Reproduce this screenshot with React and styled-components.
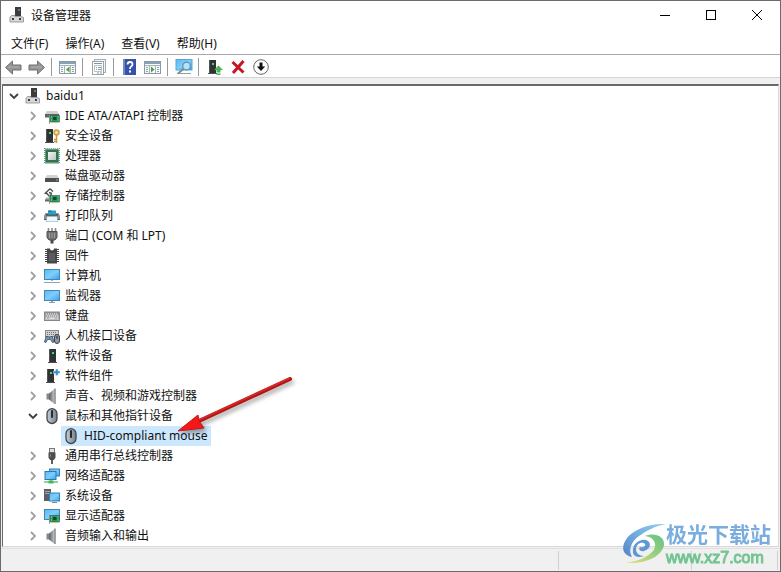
import React, { useState } from 'react';
import styled, { createGlobalStyle } from 'styled-components';

const GlobalStyle = createGlobalStyle`
    * {
        box-sizing: border-box;
    }
    body {
        margin: 0;
        background: #ffffff;
        color: #111111;
        font-family: "Noto Sans", "Noto Sans CJK SC", sans-serif;
        font-size: 12px;
    }
    button {
        font: inherit;
        color: inherit;
        background: none;
        border: none;
        padding: 0;
    }
    svg {
        display: block;
        flex: none;
        overflow: visible;
    }
`;

// ---------- shared icon pieces ----------
const Icon = ({ size = 16, children }) => (
    <svg width={size} height={size} viewBox={`0 0 ${size} ${size}`} aria-hidden="true">
        {children}
    </svg>
);

const Gradients = () => (
    <GradientDefs width="0" height="0" aria-hidden="true">
        <defs>
            <linearGradient id="screen" x1="0" y1="0" x2="1" y2="1">
                <stop offset="0" stopColor="#5db9f3" />
                <stop offset=".5" stopColor="#7fcdfb" />
                <stop offset="1" stopColor="#36a3ee" />
            </linearGradient>
            <linearGradient id="cone" x1="0" y1="0" x2="1" y2="0">
                <stop offset="0" stopColor="#5d6165" />
                <stop offset="1" stopColor="#c4c7c9" />
            </linearGradient>
            <linearGradient id="chip" x1="0" y1="0" x2="1" y2="1">
                <stop offset="0" stopColor="#f4f5f4" />
                <stop offset="1" stopColor="#b9c6bd" />
            </linearGradient>
            <linearGradient id="body" x1="0" y1="0" x2="1" y2="0">
                <stop offset="0" stopColor="#c3ccd6" />
                <stop offset="1" stopColor="#77828f" />
            </linearGradient>
            <linearGradient id="keys" x1="0" y1="0" x2="0" y2="1">
                <stop offset="0" stopColor="#8d9093" />
                <stop offset="1" stopColor="#c2c4c6" />
            </linearGradient>
            <linearGradient id="swirlBlue" x1="0" y1="1" x2="1" y2="0">
                <stop offset="0" stopColor="#4878c4" />
                <stop offset="1" stopColor="#7fd0f0" />
            </linearGradient>
            <linearGradient id="swirlGreen" x1="0" y1="1" x2="1" y2="0">
                <stop offset="0" stopColor="#e0dc6c" />
                <stop offset="1" stopColor="#4fbd78" />
            </linearGradient>
        </defs>
    </GradientDefs>
);

const Card = () => (
    <g>
        <path d="M5.500 7v9" stroke="#a4a7a5" />
        <rect x="6" y="7.500" width="9.500" height="6.500" fill="#2f9360" stroke="#226a45" strokeWidth=".6" />
        <rect x="9" y="9" width="3.500" height="3" fill="#14492f" />
        <path d="M7 9h1M13.500 9h1M7 12h1M13.500 12h1" stroke="#b4e4b9" />
        <path d="M8 14.700h6" stroke="#d0b95a" strokeDasharray="1 .6" />
    </g>
);

const Tower = ({ x = 4 }) => (
    <g>
        <rect x={x + 1} y="1" width="7" height="13" fill="#303235" />
        <path d={`M${x + 1.5} 1v13`} stroke="#505357" />
        <rect x={x + 4} y="4" width="2" height="2" fill="#45d96a" />
        <path d={`M${x} 14.500h9`} stroke="#4c4e50" />
    </g>
);

const Mouse = () => (
    <g>
        <rect x="3" y=".7" width="10" height="14.800" rx="5" fill="url(#body)" stroke="#40464e" strokeWidth="1.300" />
        <rect x="7" y="2" width="2" height="8" rx="1" fill="#26292d" />
    </g>
);

const Speaker = () => (
    <g>
        <path d="M2.500 5.500h2.500v6H2.500z" fill="#85898c" />
        <path d="M5 5.500L10.500 1v15L5 11.500z" fill="url(#cone)" />
        <path d="M11 .5v15.500" stroke="#85898c" strokeWidth="1.500" />
    </g>
);

const ICONS = {
    computer: (
        <g>
            <rect x="6" y="0" width="6" height="9" fill="#3a3c3f" />
            <rect x="9.500" y="2" width="1" height="2" fill="#8fc49f" />
            <path d="M2.500 8.500h3.500v1h6l2.500 1V15H1v-5z" fill="#d6d7d9" stroke="#8b8c8e" strokeWidth=".8" />
            <rect x="3" y="11" width="2" height="2" fill="#3c3d40" />
            <rect x="10" y="11" width="2" height="2" fill="#3c3d40" />
        </g>
    ),
    ide: (
        <g>
            <path d="M3 3h10l2 3H1z" fill="#cfcfcf" />
            <rect x="1" y="6" width="14" height="3.500" fill="#626467" />
            <Card />
        </g>
    ),
    security: (
        <g>
            <Tower x={1} />
            <circle cx="12.500" cy="4.500" r="2.400" fill="#f4e3bd" stroke="#d2a24c" strokeWidth="1.800" />
            <path d="M12.500 7v8M12 11.500h-2M12 13.500h-2" stroke="#c99a44" strokeWidth="1.600" />
        </g>
    ),
    cpu: (
        <g>
            <rect x=".7" y=".7" width="14.600" height="14.600" fill="none" stroke="#5d8f6f" strokeWidth="1.200" strokeDasharray="1 1" />
            <rect x="1.300" y="1.300" width="13.400" height="13.400" fill="#32734d" />
            <rect x="4" y="4" width="8" height="8" fill="url(#chip)" />
        </g>
    ),
    disk: (
        <g>
            <path d="M3 7h10l2 3H1z" fill="#d2d2d2" />
            <rect x="1" y="10" width="14" height="4" rx=".5" fill="#4c4e51" />
            <rect x="12" y="11.500" width="2" height="1" fill="#6ed38a" />
        </g>
    ),
    storage: (
        <g>
            <path d="M6 .8L2 4.500l3 3.500 3-1.500M6 .8l3 2.700M.5 5.500L3 5M5 4.500l3 1" fill="none" stroke="#4a4c4e" strokeWidth="1.400" />
            <path d="M2 9.500h6v3H1z" fill="#aaacae" />
            <path d="M1 12.500h6" stroke="#636567" strokeWidth="2" />
            <Card />
        </g>
    ),
    printer: (
        <g>
            <path d="M1.500 5h13L16 8v3.500H0V8z" fill="#8b8f93" />
            <path d="M2 6h12v2H2z" fill="#5b5f64" />
            <path d="M4 2.500h8v4H4z" fill="#28a2c4" />
            <path d="M4.500 3h3" stroke="#1e5d73" />
            <path d="M3 8.500h10l1 5H2z" fill="#eef7fd" stroke="#8cb0c6" strokeWidth=".6" />
            <path d="M0 11.500h2.500M13.500 11.500H16" stroke="#54585c" />
        </g>
    ),
    port: (
        <g>
            <path d="M4.500 0v4M8 0v4M11.500 0v4" stroke="#8b8b8b" strokeWidth="1.600" />
            <path d="M3 3.500h10V9.500l-2 2.500H5L3 9.500z" fill="#6f7173" stroke="#525355" />
            <path d="M5.500 5v5M8 5v5M10.500 5v5" stroke="#a2a4a5" strokeWidth=".9" />
            <rect x="6.500" y="12" width="3" height="3.500" fill="#48494b" />
        </g>
    ),
    firmware: (
        <g>
            <path d="M3 .5h3q0 2 2 2t2-2h3v15H3z" fill="#454648" />
            <path d="M2 1v14M14 1v14" stroke="#454648" strokeWidth="2" strokeDasharray="1 1" />
            <path d="M5 5h6v8H5z" fill="#5b5c5e" />
        </g>
    ),
    pc: (
        <g>
            <rect x=".5" y="1.500" width="15" height="10" fill="url(#screen)" stroke="#4187b5" />
            <path d="M7 12h2v1H7z" fill="#a3b0b8" />
            <path d="M0 14.500h16" stroke="#91a6b4" />
        </g>
    ),
    monitor: (
        <g>
            <rect x=".5" y="2.500" width="15" height="10" fill="url(#screen)" stroke="#4187b5" />
            <path d="M7 13h2v1H7zM5 14h6v1H5z" fill="#8f9da5" />
        </g>
    ),
    keyboard: (
        <g>
            <rect x=".5" y="4" width="15" height="8.500" fill="url(#keys)" stroke="#85878a" />
            <path d="M2 6h12M3 8h11" stroke="#f3f3f3" strokeDasharray="1 1" />
            <path d="M2 10.200h1M5 10.200h6M13 10.200h1" stroke="#f3f3f3" />
        </g>
    ),
    hid: (
        <g>
            <rect x="1.500" y="2.500" width="13" height="6" fill="#cfd1d3" stroke="#85878a" />
            <path d="M3 4.500h10M3 6.500h10" stroke="#727476" strokeDasharray="1 1" />
            <path d="M.5 14L2 8.500h2l1 1h1l1-1h1.500l1.500 5.500-1.500.5-2-3h-3l-1.500 3z" fill="#6f93b3" stroke="#3e5262" strokeWidth=".8" />
            <rect x="10.500" y="6.500" width="5" height="9" rx="2.500" fill="#8d98a5" stroke="#3d434a" />
            <path d="M13 8v3" stroke="#222" />
        </g>
    ),
    software: <Tower x={4} />,
    component: (
        <g>
            <Tower x={2} />
            <path d="M9.500 3h2V1h2.500v2h2v2.500h-2v2h-2.500v-2h-2z" fill="#3c93cf" stroke="#ffffff" strokeWidth=".4" />
        </g>
    ),
    speaker: <Speaker />,
    mouse: <Mouse />,
    usb: (
        <g>
            <rect x="5.500" y=".5" width="5" height="4" fill="#e0e1e2" stroke="#77787a" />
            <path d="M4.500 4.500h7V9.500l-1.500 2.500H6L4.500 9.500z" fill="#4c4e50" />
            <path d="M6.500 6v3" stroke="#828486" />
            <path d="M8 12v4" stroke="#5c5e60" strokeWidth="2" />
        </g>
    ),
    network: (
        <g>
            <rect x="5.500" y="1" width="10" height="7" fill="url(#screen)" stroke="#3482b8" />
            <rect x="1" y="3.500" width="11" height="8" fill="url(#screen)" stroke="#2d78ad" />
            <path d="M7 12v2.500M0 14h14" stroke="#6fc47c" strokeWidth="1.500" />
            <rect x="4.500" y="12.500" width="5" height="3" fill="#4db35e" />
        </g>
    ),
    system: (
        <g>
            <rect x="0" y="1" width="7" height="12" fill="#5b5e62" />
            <path d="M1 3.500h5M1 5.500h5" stroke="#a2a6a9" />
            <rect x="5.500" y="5" width="10" height="8" fill="url(#screen)" stroke="#3482b8" />
            <path d="M8 14.500h5" stroke="#7e8d97" />
        </g>
    ),
    display: (
        <g>
            <rect x=".5" y="1.500" width="15" height="10" fill="url(#screen)" stroke="#4187b5" />
            <Card />
        </g>
    ),
};

const PaneIcon = ({ flip }) => (
    <Icon size={17}>
        <rect x=".5" y="2.500" width="16" height="12" fill="#f7f9fa" stroke="#8d999f" />
        <path d="M1 4h15" stroke="#87a3b3" strokeWidth="2" />
        <path d="M1 6.500h15M5.500 7v7M11.500 7v7" stroke="#a5b3bb" />
        <path d="M2 8.500h2M2 10.500h2M2 12.500h2M13 8.500h2M13 10.500h2M13 12.500h2" stroke="#8aa5b4" />
        {flip ? <path d="M7 7.500l3.500 3L7 13.500z" fill="#4f9d37" /> : <path d="M10.500 7.500l-3.500 3 3.500 3z" fill="#4f9d37" />}
    </Icon>
);

const BackArrow = ({ forward }) => (
    <Icon size={17}>
        <path
            d={forward ? 'M16.500 8.500L9.500 2v4H1v5h8.500v4z' : 'M.5 8.500L7.500 2v4H16v5H7.500v4z'}
            fill="#959595"
            stroke="#707070"
            strokeLinejoin="round"
        />
        <path d="M3 8h11" stroke="#b0b0b0" />
    </Icon>
);

// null is a separator
const TOOLS = [
    { name: '后退', icon: <BackArrow /> },
    { name: '前进', icon: <BackArrow forward /> },
    null,
    { name: '显示/隐藏控制台树', icon: <PaneIcon /> },
    null,
    {
        name: '属性',
        icon: (
            <Icon>
                <rect x="3.500" y=".5" width="11" height="13" fill="#f2f4f5" stroke="#a5adb2" />
                <rect x="1.500" y="2.500" width="11" height="13" fill="#ffffff" stroke="#98a3a9" />
                <path d="M3 4.500h8" stroke="#8195a0" />
                <path d="M3.500 6.500h7v6h-7z" fill="none" stroke="#b9c2c7" />
                <path d="M5 8.500h1M7 8.500h3M5 10.500h1M7 10.500h3M6 14h2M9 14h2" stroke="#839aa7" />
            </Icon>
        ),
    },
    null,
    {
        name: '帮助',
        icon: (
            <Icon>
                <rect x="1" y="0" width="13" height="16" fill="#3653a8" />
                <path d="M2 0v16" stroke="#7189c4" strokeWidth="2" />
                <path d="M5.500 5.500Q5.700 3 8 3q2.500 0 2.500 2.200 0 1.300-1.300 2.200Q8 8.300 8 10" fill="none" stroke="#fff" strokeWidth="1.800" />
                <rect x="7" y="11.500" width="2" height="2" fill="#fff" />
            </Icon>
        ),
    },
    { name: '操作', icon: <PaneIcon flip /> },
    null,
    {
        name: '扫描检测硬件改动',
        icon: (
            <Icon>
                <rect x="0" y=".5" width="16" height="10.500" fill="url(#screen)" stroke="#5ba5cf" />
                <path d="M1 14.500h14" stroke="#8da0aa" />
                <path d="M8 9.500l-6 5" stroke="#7c8c96" strokeWidth="1.800" />
                <circle cx="10.500" cy="7" r="3.800" fill="#b5e2f9" stroke="#5e91ad" strokeWidth="1.200" />
            </Icon>
        ),
    },
    null,
    {
        name: '更新驱动程序',
        icon: (
            <Icon>
                <Tower x={1} />
                <path d="M11.500 6.500l4.500 4.500h-2.500v2.500h-4V11H7z" fill="#47b552" />
                <path d="M9.500 15.200h4" stroke="#47b552" strokeWidth="1.500" />
            </Icon>
        ),
    },
    {
        name: '卸载设备',
        icon: (
            <Icon>
                <path d="M2.500 3l11 10.500M13.500 2L3 14" stroke="#c7161f" strokeWidth="3" />
            </Icon>
        ),
    },
    {
        name: '禁用设备',
        icon: (
            <Icon>
                <circle cx="8" cy="8" r="7.300" fill="#fff" stroke="#666" />
                <path d="M6.500 3.500h3v4h2.700L8 12 3.800 7.500h2.700z" fill="#111" />
            </Icon>
        ),
    },
];

const MENUS = ['文件(F)', '操作(A)', '查看(V)', '帮助(H)'];

const DEVICES = [
    { label: 'IDE ATA/ATAPI 控制器', icon: 'ide' },
    { label: '安全设备', icon: 'security' },
    { label: '处理器', icon: 'cpu' },
    { label: '磁盘驱动器', icon: 'disk' },
    { label: '存储控制器', icon: 'storage' },
    { label: '打印队列', icon: 'printer' },
    { label: '端口 (COM 和 LPT)', icon: 'port' },
    { label: '固件', icon: 'firmware' },
    { label: '计算机', icon: 'pc' },
    { label: '监视器', icon: 'monitor' },
    { label: '键盘', icon: 'keyboard' },
    { label: '人机接口设备', icon: 'hid' },
    { label: '软件设备', icon: 'software' },
    { label: '软件组件', icon: 'component' },
    { label: '声音、视频和游戏控制器', icon: 'speaker' },
    {
        label: '鼠标和其他指针设备',
        icon: 'mouse',
        open: true,
        children: [{ label: 'HID-compliant mouse', icon: 'mouse', selected: true, leaf: true }],
    },
    { label: '通用串行总线控制器', icon: 'usb' },
    { label: '网络适配器', icon: 'network' },
    { label: '系统设备', icon: 'system' },
    { label: '显示适配器', icon: 'display' },
    { label: '音频输入和输出', icon: 'speaker' },
];

const ROOT = { label: 'baidu1', icon: 'computer', open: true, children: DEVICES };

const TreeNode = ({ node }) => {
    const [open, setOpen] = useState(Boolean(node.open));

    return (
        <li role="treeitem" aria-expanded={node.leaf ? undefined : open} aria-selected={Boolean(node.selected)}>
            <Row $leaf={node.leaf}>
                {node.leaf ? null : (
                    <Toggle aria-label={`展开 ${node.label}`} onClick={() => setOpen(!open)}>
                        <svg width="10" height="10" viewBox="0 0 10 10" aria-hidden="true">
                            {open ? (
                                <path d="M1 3l4 4 4-4" fill="none" stroke="#3f3f3f" strokeWidth="1.800" />
                            ) : (
                                <path d="M3 1l4 4-4 4" fill="none" stroke="#a0a0a0" strokeWidth="1.800" />
                            )}
                        </svg>
                    </Toggle>
                )}
                <Item $selected={node.selected}>
                    <Icon>{ICONS[node.icon]}</Icon>
                    <Label>{node.label}</Label>
                    {node.selected && <Pointer />}
                </Item>
            </Row>
            {open && node.children && (
                <Branch role="group">
                    {node.children.map((child) => (
                        <TreeNode key={child.label} node={child} />
                    ))}
                </Branch>
            )}
        </li>
    );
};

const Pointer = () => (
    <PointerArt width="120" height="60" viewBox="0 0 120 60" aria-hidden="true">
        <path d="M113 6L22 48" stroke="#b41515" strokeWidth="4" strokeLinecap="round" />
        <path d="M112 5.500L22 47" stroke="#d62c2b" strokeWidth="1.500" strokeLinecap="round" />
        <path d="M1 58l20-16 1 6 5 7z" fill="#f51818" stroke="#c41616" strokeWidth="1" />
    </PointerArt>
);

const App = () => {
    return (
        <Window>
            <GlobalStyle />
            <Gradients />
            <TitleBar>
                <Title>
                    <Icon>{ICONS.computer}</Icon>
                    设备管理器
                </Title>
                <Controls>
                    <ControlButton aria-label="最小化">
                        <svg width="10" height="10" fill="none" stroke="#000">
                            <path d="M0 5.500h10" />
                        </svg>
                    </ControlButton>
                    <ControlButton aria-label="最大化">
                        <svg width="10" height="10" fill="none" stroke="#000">
                            <rect x=".5" y=".5" width="9" height="9" />
                        </svg>
                    </ControlButton>
                    <ControlButton aria-label="关闭">
                        <svg width="10" height="10" fill="none" stroke="#000">
                            <path d="M0 0l10 10M10 0L0 10" />
                        </svg>
                    </ControlButton>
                </Controls>
            </TitleBar>

            <MenuBar>
                {MENUS.map((menu) => (
                    <MenuButton key={menu}>{menu}</MenuButton>
                ))}
            </MenuBar>

            <Toolbar role="toolbar">
                {TOOLS.map((tool, i) =>
                    tool ? (
                        <ToolButton key={i} aria-label={tool.name}>
                            {tool.icon}
                        </ToolButton>
                    ) : (
                        <Separator key={i} />
                    )
                )}
            </Toolbar>

            <TreePanel>
                <Tree role="tree">
                    <TreeNode node={ROOT} />
                </Tree>
            </TreePanel>

            <StatusBar>
                <StatusCell />
                <StatusCell $width="133px" />
                <StatusCell $width="86px" />
            </StatusBar>

            <Watermark>
                <svg width="43" height="42" viewBox="0 0 43 42" aria-hidden="true">
                    <path
                        d="M43 1C27 0 11 6 4 15C-3 25 0 32 9 34C5 27 8 19 16 13C23 8 32 3 43 1z"
                        fill="url(#swirlBlue)"
                    />
                    <path
                        d="M10 30C9 21 16 16 23 17C29 19 28 26 21 28C17 29 15 26 17 24C20 25 23 23 22 21C19 18 13 21 13 26C13 30 16 33 21 33C16 35 11 34 10 30z"
                        fill="#4f8fd2"
                    />
                    <path
                        d="M22 13C31 9 42 13 41 22C39 33 24 41 3 40C17 38 30 32 32 24C33 18 29 14 22 13z"
                        fill="url(#swirlGreen)"
                    />
                </svg>
                <WatermarkText>
                    <SiteName>极光下载站</SiteName>
                    <SiteUrl>www.xz7.com</SiteUrl>
                </WatermarkText>
            </Watermark>
        </Window>
    );
};

const GradientDefs = styled.svg`
    position: absolute;
`;

const Window = styled.main`
    position: relative;
    display: flex;
    flex-direction: column;
    min-height: 100vh;
    border: 1px solid #6b6b6b;
    background: #ffffff;
`;

const TitleBar = styled.header`
    display: flex;
    justify-content: space-between;
    height: 28px;
`;

const Title = styled.h1`
    display: flex;
    align-items: center;
    gap: 6px;
    margin: 0;
    padding-left: 8px;
    font-size: 12px;
    font-weight: 400;
`;

const Controls = styled.div`
    display: flex;
`;

const ControlButton = styled.button`
    display: flex;
    align-items: center;
    justify-content: center;
    width: 46px;
`;

const MenuBar = styled.nav`
    display: flex;
    gap: 1px;
    height: 26px;
    padding: 2px 0 0 2px;
    border-bottom: 1px solid #a9a9a9;
`;

const MenuButton = styled.button`
    padding: 0 8px;
`;

const Toolbar = styled.div`
    display: flex;
    align-items: center;
    height: 23px;
    padding: 2px 0 0 1px;
    border-bottom: 1px solid #d5d5d5;
`;

const ToolButton = styled.button`
    display: flex;
    align-items: center;
    justify-content: center;
    width: 23px;
    height: 20px;
`;

const Separator = styled.div`
    width: 8px;
    height: 18px;
    padding-left: 3px;
    &::before {
        content: '';
        display: block;
        width: 1px;
        height: 100%;
        background: #9a9a9a;
    }
`;

const TreePanel = styled.section`
    flex: 1;
    display: flex;
    padding: 6px 1px 1px;
    background: #f0f0f0;
`;

const Tree = styled.ul`
    flex: 1;
    margin: 0;
    padding: 0 1px;
    list-style: none;
    background: #ffffff;
    border: 1px solid #d9d9d9;
    border-top: 2px solid #696969;
    border-left-color: #696969;
`;

const Branch = styled.ul`
    margin: 0;
    padding-left: 19px;
    list-style: none;
`;

const Row = styled.div`
    display: flex;
    height: 20px;
    padding-left: ${(props) => (props.$leaf ? '19px' : '0')};
`;

const Toggle = styled.button`
    display: flex;
    align-items: center;
    justify-content: center;
    width: 19px;
`;

const Item = styled.div`
    position: relative;
    display: flex;
    align-items: center;
    gap: 5px;
    padding: 0 4px 0 2px;
    white-space: nowrap;
    background: ${(props) => (props.$selected ? '#cce8ff' : 'transparent')};
`;

const Label = styled.span`
    line-height: 19px;
    padding-bottom: 1px;
`;

const PointerArt = styled.svg`
    position: absolute;
    left: 116px;
    top: -53px;
    fill: none;
    filter: drop-shadow(2px 3px 2px rgba(0, 0, 0, 0.35));
    pointer-events: none;
`;

const StatusBar = styled.footer`
    display: flex;
    height: 23px;
    padding: 2px 2px 1px 0;
    background: #f0f0f0;
    border-top: 1px solid #e0e0e0;
`;

const StatusCell = styled.div`
    flex: ${(props) => (props.$width ? `0 0 ${props.$width}` : '1')};
    border-right: 1px solid #d0d0d0;
`;

const Watermark = styled.aside`
    position: absolute;
    right: 9px;
    bottom: 4px;
    display: flex;
    align-items: center;
    opacity: 0.9;
`;

const WatermarkText = styled.div`
    display: flex;
    flex-direction: column;
    gap: 4px;
`;

const SiteName = styled.strong`
    font-family: "Noto Sans CJK SC", sans-serif;
    font-size: 21px;
    font-weight: 700;
    line-height: 24px;
    color: #6ba5db;
`;

const SiteUrl = styled.span`
    font-family: "Liberation Sans", sans-serif;
    font-size: 16px;
    line-height: 18px;
    color: #66c088;
    -webkit-text-stroke: 1px #66c088;
`;

export default App;
